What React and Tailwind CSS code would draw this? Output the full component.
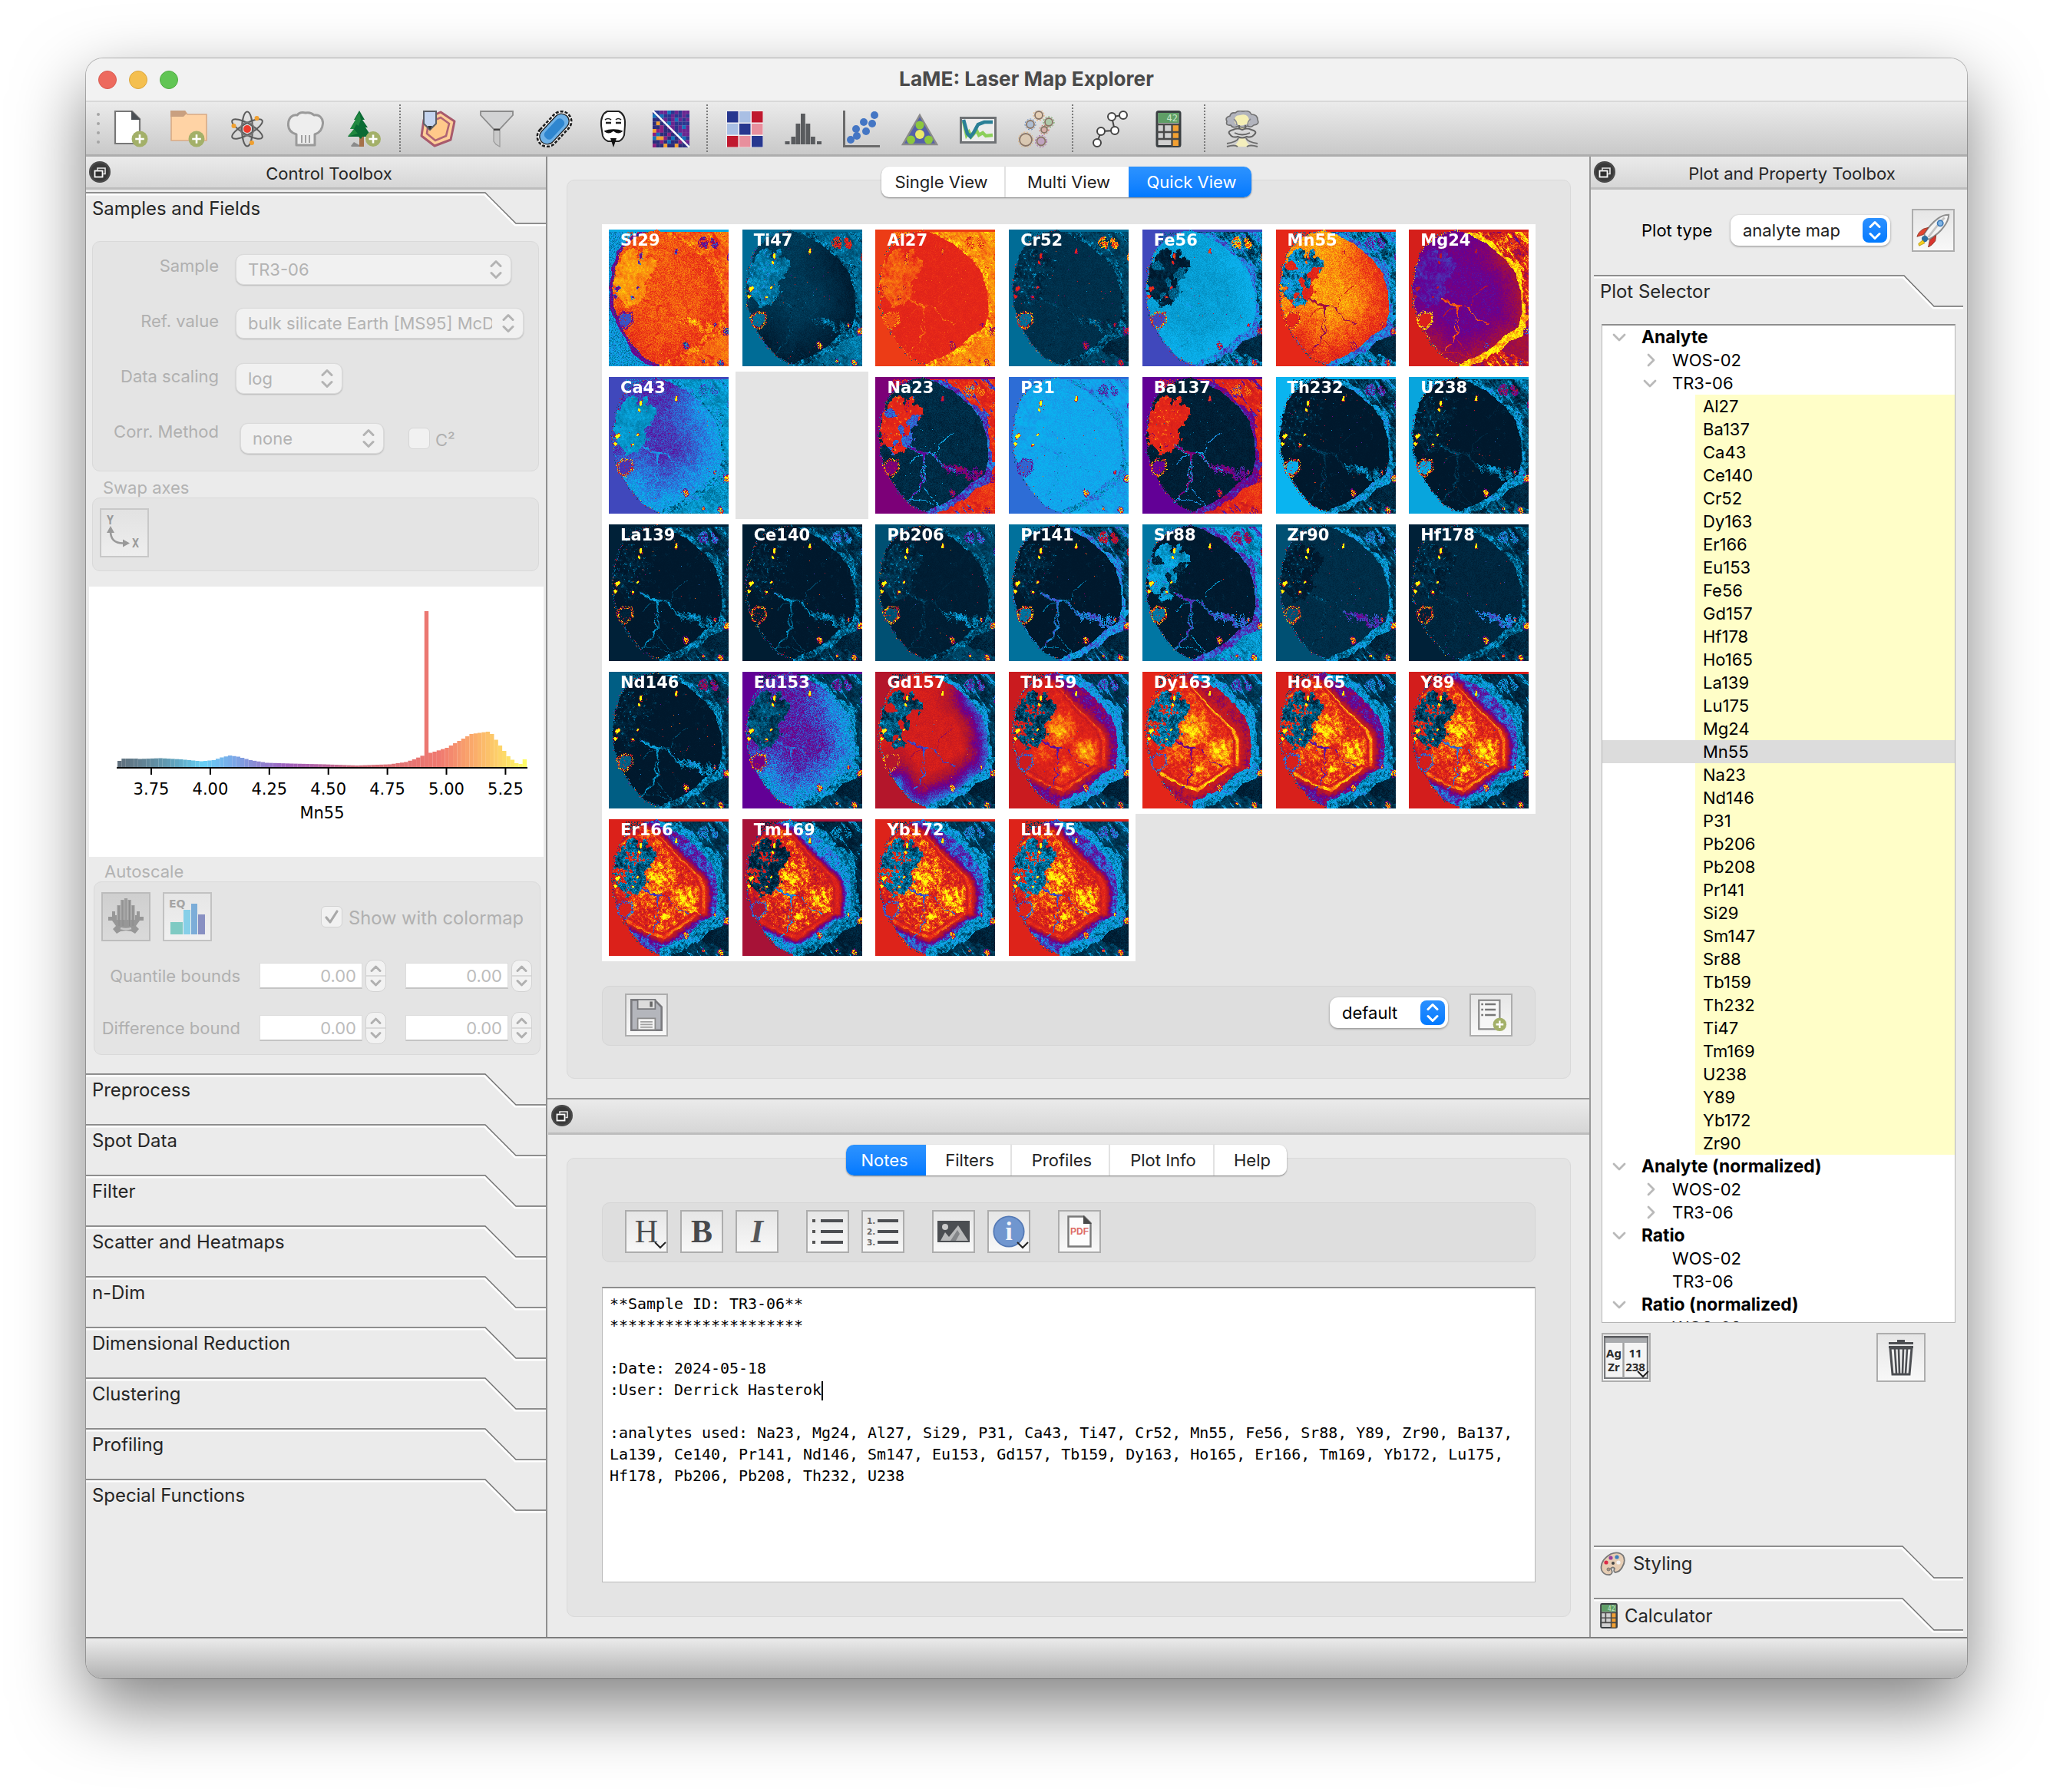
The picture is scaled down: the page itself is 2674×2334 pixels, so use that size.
import React, { useLayoutEffect, useRef } from "react";

/* ------------------------------------------------------------------ */
/* Colour scale shared by the element maps and the histogram           */
/* ------------------------------------------------------------------ */
const STOPS = [
  [0, 0, 24, 44],
  [0.06, 0, 52, 80],
  [0.14, 0, 108, 150],
  [0.21, 10, 180, 240],
  [0.28, 40, 118, 220],
  [0.33, 64, 72, 188],
  [0.41, 98, 0, 150],
  [0.47, 124, 0, 120],
  [0.57, 172, 20, 48],
  [0.7, 208, 28, 28],
  [0.79, 232, 40, 24],
  [0.87, 248, 120, 16],
  [0.94, 252, 190, 12],
  [1, 255, 255, 10],
];

function scaleColor(t) {
  const v = t < 0 ? 0 : t > 1 ? 1 : t;
  for (let i = 1; i < STOPS.length; i++) {
    if (v <= STOPS[i][0]) {
      const a = STOPS[i - 1];
      const b = STOPS[i];
      const k = (v - a[0]) / (b[0] - a[0]);
      return [a[1] + (b[1] - a[1]) * k, a[2] + (b[2] - a[2]) * k, a[3] + (b[3] - a[3]) * k];
    }
  }
  return [255, 255, 10];
}

/* ------------------------------------------------------------------ */
/* Procedural garnet section                                           */
/* ------------------------------------------------------------------ */
const W = 156;
const H = 178;

function hash(x, y, s) {
  let h = (x * 374761393 + y * 668265263 + s * 982451653) | 0;
  h = Math.imul(h ^ (h >>> 13), 1274126177);
  h ^= h >>> 16;
  return (h >>> 0) / 4294967296;
}
function noise(x, y, s) {
  const xi = Math.floor(x);
  const yi = Math.floor(y);
  const fx = x - xi;
  const fy = y - yi;
  const sx = fx * fx * (3 - 2 * fx);
  const sy = fy * fy * (3 - 2 * fy);
  const a = hash(xi, yi, s);
  const b = hash(xi + 1, yi, s);
  const c = hash(xi, yi + 1, s);
  const d = hash(xi + 1, yi + 1, s);
  return a + (b - a) * sx + (c - a) * sy + (a - b - c + d) * sx * sy;
}
function fbm(x, y, s) {
  return noise(x, y, s) * 0.55 + noise(x * 2.1, y * 2.1, s + 1) * 0.3 + noise(x * 4.3, y * 4.3, s + 2) * 0.15;
}
function segDist(px, py, ax, ay, bx, by) {
  const dx = bx - ax;
  const dy = by - ay;
  let t = ((px - ax) * dx + (py - ay) * dy) / (dx * dx + dy * dy);
  t = t < 0 ? 0 : t > 1 ? 1 : t;
  return Math.hypot(px - ax - dx * t, py - ay - dy * t);
}
function lineDist(px, py, pts) {
  let d = 9;
  for (let i = 1; i < pts.length; i++) {
    d = Math.min(d, segDist(px, py, pts[i - 1][0], pts[i - 1][1], pts[i][0], pts[i][1]));
  }
  return d;
}
function inPoly(px, py, p) {
  let r = false;
  for (let i = 0, j = p.length - 1; i < p.length; j = i++) {
    if (p[i][1] > py !== p[j][1] > py && px < ((p[j][0] - p[i][0]) * (py - p[i][1])) / (p[j][1] - p[i][1]) + p[i][0]) r = !r;
  }
  return r;
}
function glow(u, v, x, y, w) {
  return Math.exp(-((u - x) * (u - x) + (v - y) * (v - y)) / w);
}

const GRAIN = [[0.3, 0.02], [0.2, 0.06], [0.1, 0.16], [0.05, 0.28], [0.028, 0.42], [0.04, 0.56], [0.09, 0.68], [0.14, 0.77], [0.21, 0.86], [0.3, 0.94], [0.42, 0.985], [0.55, 0.93], [0.68, 0.87], [0.8, 0.77], [0.91, 0.71], [0.94, 0.6], [0.93, 0.45], [0.89, 0.32], [0.8, 0.22], [0.68, 0.12], [0.52, 0.04], [0.4, 0.0]];
const PATCH = [[0.13, 0.17], [0.2, 0.12], [0.25, 0.19], [0.32, 0.14], [0.35, 0.2], [0.39, 0.27], [0.33, 0.33], [0.3, 0.4], [0.32, 0.45], [0.27, 0.5], [0.2, 0.56], [0.14, 0.55], [0.1, 0.5], [0.03, 0.47], [0.05, 0.3]];
const ZONE = [[0.25, 0.05], [0.4, 0.09], [0.52, 0.21], [0.64, 0.32], [0.78, 0.43], [0.82, 0.52], [0.81, 0.69], [0.74, 0.7], [0.46, 0.88], [0.15, 0.76], [0.08, 0.6], [0.03, 0.45], [0.1, 0.18]];
const RING = [[[0.42, 0.1], [0.52, 0.21], [0.64, 0.32], [0.75, 0.41], [0.79, 0.5], [0.79, 0.68]], [[0.71, 0.71], [0.6, 0.78], [0.46, 0.865], [0.3, 0.82], [0.15, 0.74]]];
const VEINS = [
  [[0.26, 0.5], [0.34, 0.54], [0.42, 0.565], [0.5, 0.57], [0.55, 0.62], [0.57, 0.66], [0.66, 0.68]],
  [[0.4, 0.57], [0.415, 0.66], [0.41, 0.74], [0.36, 0.81], [0.28, 0.91]],
  [[0.4, 0.66], [0.37, 0.72], [0.41, 0.76]],
];
const FINE = [
  [[0.52, 0.56], [0.54, 0.48], [0.59, 0.44], [0.65, 0.41]],
  [[0.28, 0.9], [0.38, 0.89], [0.46, 0.93], [0.54, 0.94]],
  [[0.4, 0.81], [0.46, 0.87], [0.53, 0.93]],
  [[0.28, 0.64], [0.34, 0.58], [0.4, 0.57]],
];
const WEDGE = [[0.54, 0.6], [0.62, 0.66], [0.78, 0.68], [0.92, 0.67], [0.9, 0.73], [0.82, 0.77], [0.74, 0.72], [0.6, 0.69]];
const LENS = [[0.72, 0.87], [0.84, 0.79], [1.05, 0.76], [1.05, 0.97], [0.9, 0.93]];
const XTAL = [[0.07, 0.64], [0.12, 0.6], [0.18, 0.61], [0.19, 0.67], [0.14, 0.72], [0.09, 0.7]];
const SPOTS = [[0.05, 0.48, 0.02], [0.07, 0.43, 0.016], [0.24, 0.42, 0.013], [0.27, 0.19, 0.014], [0.255, 0.24, 0.009], [0.56, 0.16, 0.011], [0.19, 0.5, 0.014]];
const BIG = [[0.64, 0.845, 0.024], [0.88, 0.69, 0.014], [0.98, 0.74, 0.024], [0.93, 0.97, 0.022], [0.78, 0.96, 0.014]];
const ACC = [[0.78, 0.09, 0.042], [0.88, 0.1, 0.036], [1.0, 0.2, 0.02]];

let cached = null;
function fields() {
  if (cached) return cached;
  cached = [];
  for (let y = 0; y < H; y++) {
    for (let x = 0; x < W; x++) {
      const u = x / W;
      const v = y / H;
      const wu = u + (fbm(u * 22, v * 22, 5) - 0.5) * 0.04;
      const wv = v + (fbm(u * 22, v * 22, 9) - 0.5) * 0.04;
      const ju = u + (fbm(u * 26, v * 26, 15) - 0.5) * 0.11;
      const jv = v + (fbm(u * 26, v * 26, 19) - 0.5) * 0.11;
      const near = (list, squash) => {
        let m = 9;
        for (const s of list) m = Math.min(m, Math.hypot(wu - s[0], (wv - s[1]) * squash) / s[2]);
        return m;
      };
      let vein = 9;
      for (const l of VEINS) vein = Math.min(vein, lineDist(wu, wv, l));
      let fine = 9;
      for (const l of FINE) fine = Math.min(fine, lineDist(wu, wv, l));
      let ring = 9;
      for (const l of RING) ring = Math.min(ring, lineDist(u + (wu - u) * 0.5, v + (wv - v) * 0.5, l));
      const gu = u + (wu - u) * 0.5;
      const gv = v + (wv - v) * 0.5;
      cached.push({
        u, v,
        inside: inPoly(gu, gv, GRAIN),
        edge: lineDist(gu, gv, GRAIN.concat([GRAIN[0]])),
        patch: inPoly(ju, jv, PATCH),
        zone: inPoly(gu, gv, ZONE),
        zd: lineDist(gu, gv, ZONE.concat([ZONE[0]])),
        ring, vein, fine,
        wedge: inPoly(ju, jv, WEDGE),
        lens: inPoly(wu, wv, LENS),
        xtal: inPoly(gu, gv, XTAL),
        xedge: lineDist(gu, gv, XTAL.concat([XTAL[0]])),
        spot: near(SPOTS, v < 0.3 ? 0.6 : 1.2),
        big: near(BIG, 0.9),
        acc: near(ACC, 0.9),
        blob: Math.max(glow(u, v, 0.43, 0.42, 0.016), glow(u, v, 0.64, 0.58, 0.012), 0.6 * glow(u, v, 0.48, 0.72, 0.01), 0.7 * glow(u, v, 0.28, 0.6, 0.006)),
        n1: fbm(u * 9, v * 9, 31) - 0.5,
        n2: fbm(u * 24, v * 24, 37) - 0.5,
        n3: noise(u * 62, v * 62, 51) - 0.5,
        streak: fbm((u * 0.75 - v * 0.65) * 38, (u * 0.6 + v * 0.8) * 9, 41) - 0.5,
      });
    }
  }
  return cached;
}

function paint(ctx, m, seed) {
  const img = ctx.createImageData(W, H);
  const f = fields();
  const hot = m.hot === undefined ? 1.02 : m.hot;
  const dark = m.core < 0.1;
  for (let i = 0; i < f.length; i++) {
    const p = f[i];
    const x = i % W;
    const y = (i / W) | 0;
    const r = hash(x, y, seed) - 0.5;
    const r2 = hash(x, y, seed + 77);
    const right = p.u > 0.42;
    let val;
    if (!p.inside) {
      if (!right) {
        val = m.bg + (m.bn || 0) * r;
        if (p.v < 0.1 && p.u > 0.14 && r2 > 0.6) val = m.matrix + r * 0.1;
        if (m.halo !== undefined && p.edge < 0.03 + p.n1 * 0.04) val = m.halo + r * 0.14;
        if (p.edge < 0.014 && r2 > 0.82) val = r2 > 0.92 ? 0.5 + r * 0.9 : 0.1;
      } else {
        const mn = m.mn || 0.12;
        val = m.matrix + p.streak * mn * 1.6 + p.n3 * mn * 0.7 + r * mn * 0.6;
        if (p.lens) val = m.lens === undefined ? m.matrix * 0.45 + r * 0.05 : m.lens + r * 0.06 + p.n2 * 0.06;
        const band = (p.v > 0.62 ? 0.05 : 0.035) + p.n1 * 0.08;
        if (p.edge < band && p.v > 0.02) val = m.rim + r * 0.1 + p.n3 * 0.16 + p.streak * 0.2;
        if (p.streak > 0.17 && !p.lens) val = m.rim + r * 0.16 + p.n3 * 0.1;
        if (p.acc < 1 && p.n3 + r * 0.5 > -0.15) val = (m.acc === undefined ? m.rim + 0.2 : m.acc) + r * 0.3;
      }
      if (p.v < 0.012) val = m.bg;
    } else {
      const cn = m.n || 0.03;
      if (m.zoned) {
        const out = m.outer + r * 0.14 + p.n3 * 0.16 + p.n2 * 0.16;
        if (p.zone) {
          val = m.core - 0.07 + p.blob * 0.2 + p.n2 * m.zn * 0.55 + p.n3 * m.zn * 0.5 + r * m.zn * 0.35;
          if (p.ring < 0.035 && p.blob < 0.5) val = m.core - 0.11 + r * 0.12 + p.n3 * 0.1;
          if (p.ring < 0.009) val = m.ring + r * 0.08 + p.n2 * 0.16;
          else if (p.ring < 0.016) val = (m.ring + m.core - 0.08) * 0.5 + r * 0.06;
        } else {
          const k = Math.min(1, p.zd / 0.05);
          val = out * k + (m.core - 0.14) * (1 - k) + p.n3 * 0.1 * (1 - k);
          if (p.edge < 0.03 + p.n2 * 0.04 && right) val = m.rim + r * 0.1 + p.n3 * 0.1;
        }
      } else {
        const k = Math.max(0, Math.min(1, 1 - (p.edge + p.n1 * 0.05) / (m.fw || 0.2)));
        const kk = k * Math.max(0, Math.min(1, (p.u + p.v - 0.6) * 2.5));
        val = m.core + ((m.edge === undefined ? m.core : m.edge) - m.core) * kk + r * cn + p.n2 * cn * 0.6;
      }
      if (p.wedge && m.wedge !== undefined && p.n2 + r * 0.6 > -0.2) val = m.wedge + r * 0.14 + p.n2 * 0.35;
      if (p.patch) {
        const pn = m.pn || 0.06;
        val = m.patch + r * pn * 0.7 + p.n2 * pn * 1.6 + p.n3 * pn * 0.8;
        if (m.zoned && p.n2 + p.n3 * 0.35 > 0.13) val = m.core - 0.08 + r * 0.25;
        if (m.pf !== undefined && p.n1 > 0.12) val = m.pf + r * 0.1;
      }
      const vw = (m.zoned ? 0.003 : 0.004) + p.n2 * 0.012;
      if (p.vein < vw) val = m.vein + r * 0.08 + p.n3 * 0.1;
      else if (p.vein < 0.009 && dark && r2 > 0.35) val = (m.vein + m.core) * 0.45 + r * 0.04;
      if (p.fine < 0.004 && !m.zoned && r2 > 0.3) val = val * 0.5 + m.vein * 0.5;
      if (dark && !p.patch && p.n2 > 0.2 && r2 > 0.6) val = Math.max(val, 0.03);
      if (dark && p.patch && p.n3 > 0.3 && r2 > 0.5) val += 0.09;
      if (p.edge < 0.008 && !right && r2 > 0.6) val = r2 > 0.84 ? 0.5 + r * 0.95 : m.rim;
      if (p.spot < 0.8) val = hot + r * 0.12;
      else if (p.spot < 1.15 && r2 > 0.55) val = hot * 0.65;
      if (r2 > 0.998) val = m.speck === undefined ? 0.5 + r * 0.8 : m.speck;
    }
    if (p.big < 0.9 && r2 > 0.15) val = hot - 0.14 + r * 0.45;
    else if (p.big < 1.2 && r2 > 0.5) val = 0.45;
    if (p.xtal && p.xedge > 0.008) {
      val = (m.xtal === undefined ? m.bg : m.xtal) + r * 0.03;
      if (r2 > 0.95) val = 0.7;
    } else if (p.xedge < 0.012 && r2 > 0.4) {
      val = m.xr === undefined ? 0.78 + r * 0.6 : m.xr + r * 0.15;
    }
    const c = scaleColor(val);
    img.data[i * 4] = c[0];
    img.data[i * 4 + 1] = c[1];
    img.data[i * 4 + 2] = c[2];
    img.data[i * 4 + 3] = 255;
  }
  ctx.putImageData(img, 0, 0);
}

const REE = { zoned: true, zn: 0.42, mn: 0.07, lens: 0.02, xr: 0.3, pn: 0.14 };
const DARK = { n: 0.012, mn: 0.1, lens: 0.03 };

const MAPS = [
  ["Si29", { bg: 0.2, bn: 0.14, halo: 0.42, core: 0.835, edge: 0.8, n: 0.09, patch: 0.9, matrix: 0.84, mn: 0.1, lens: 0.86, rim: 0.85, vein: 0.8, wedge: 0.87, hot: 0.42, speck: 0.95, xtal: 0.32, xr: 0.42, acc: 0.42 }],
  ["Ti47", { bg: 0.14, core: 0.065, edge: 0.01, fw: 0.3, n: 0.03, patch: 0.155, matrix: 0.13, mn: 0.07, lens: 0.15, rim: 0.12, vein: 0.07, wedge: 0.08, acc: 0.7 }],
  ["Al27", { bg: 0.81, core: 0.775, n: 0.05, patch: 0.84, matrix: 0.89, mn: 0.08, lens: 0.88, rim: 0.91, vein: 0.84, hot: 0.86, speck: 0.86, xtal: 0.83, xr: 0.88, acc: 0.81 }],
  ["Cr52", { ...DARK, bg: 0.14, core: 0.05, n: 0.03, patch: 0.055, matrix: 0.08, mn: 0.06, rim: 0.1, vein: 0.065, wedge: 0.07, hot: 0.75, acc: 0.85 }],
  ["Fe56", { bg: 0.33, core: 0.188, edge: 0.205, n: 0.03, patch: 0.02, pf: 0.12, matrix: 0.12, mn: 0.2, lens: 0.04, rim: 0.27, vein: 0.205, hot: 0.8, acc: 0.86 }],
  ["Mn55", { bg: 0.78, core: 0.9, edge: 0.78, fw: 0.3, n: 0.1, patch: 0.17, pn: 0.16, pf: 0.76, matrix: 0.14, mn: 0.2, lens: 0.03, rim: 0.28, vein: 0.55, hot: 0.85, speck: 0.98, xtal: 0.78, acc: 0.35 }],
  ["Mg24", { bg: 0.72, core: 0.43, edge: 0.55, n: 0.08, patch: 0.39, matrix: 0.7, mn: 0.4, lens: 0.55, rim: 0.96, vein: 0.83, hot: 0.6, speck: 0.5, xtal: 0.74, xr: 0.95, acc: 0.75 }],
  ["Ca43", { bg: 0.33, core: 0.35, edge: 0.22, fw: 0.35, n: 0.1, patch: 0.18, pn: 0.03, matrix: 0.18, mn: 0.05, lens: 0.17, rim: 0.2, vein: 0.25, xtal: 0.35, acc: 0.22 }],
  null,
  ["Na23", { bg: 0.47, core: 0.04, n: 0.05, patch: 0.77, pf: 0.3, matrix: 0.78, mn: 0.12, lens: 0.8, rim: 0.34, vein: 0.4, wedge: 0.44, hot: 0.7, speck: 0.2, acc: 0.8 }],
  ["P31", { bg: 0.29, core: 0.225, n: 0.035, patch: 0.225, pn: 0.03, matrix: 0.23, mn: 0.04, lens: 0.23, rim: 0.235, vein: 0.225, xtal: 0.3, xr: 0.4, acc: 0.3 }],
  ["Ba137", { bg: 0.41, core: 0.015, n: 0.03, patch: 0.77, matrix: 0.76, mn: 0.14, lens: 0.8, rim: 0.42, vein: 0.48, wedge: 0.4, hot: 0.78, speck: 0.15, acc: 0.8 }],
  ["Th232", { ...DARK, bg: 0.21, core: 0.0, patch: 0.01, matrix: 0.06, mn: 0.15, rim: 0.2, vein: 0.06, wedge: 0.12, acc: 0.35 }],
  ["U238", { ...DARK, bg: 0.195, core: 0.0, patch: 0.02, matrix: 0.08, mn: 0.15, rim: 0.18, vein: 0.07, wedge: 0.12, acc: 0.45 }],
  ["La139", { ...DARK, bg: 0.02, core: 0.0, patch: 0.01, matrix: 0.05, rim: 0.13, vein: 0.18, wedge: 0.11, acc: 0.3 }],
  ["Ce140", { ...DARK, bg: 0.01, core: 0.0, patch: 0.01, matrix: 0.05, rim: 0.13, vein: 0.16, wedge: 0.11, acc: 0.22 }],
  ["Pb206", { ...DARK, bg: 0.1, core: 0.012, patch: 0.05, matrix: 0.08, mn: 0.05, rim: 0.1, vein: 0.06, wedge: 0.13, acc: 0.3 }],
  ["Pr141", { ...DARK, bg: 0.145, core: 0.0, patch: 0.02, matrix: 0.07, mn: 0.14, rim: 0.26, vein: 0.3, wedge: 0.26, acc: 0.6 }],
  ["Sr88", { ...DARK, bg: 0.15, core: 0.005, patch: 0.185, pf: 0.03, matrix: 0.18, mn: 0.1, lens: 0.18, rim: 0.34, vein: 0.36, wedge: 0.28, acc: 0.5 }],
  ["Zr90", { ...DARK, bg: 0.1, core: 0.045, n: 0.03, patch: 0.01, matrix: 0.05, rim: 0.18, vein: 0.06, wedge: 0.34, acc: 0.2 }],
  ["Hf178", { ...DARK, bg: 0.02, core: 0.03, n: 0.03, patch: 0.03, matrix: 0.05, rim: 0.13, vein: 0.05, wedge: 0.26, acc: 0.2 }],
  ["Nd146", { ...DARK, bg: 0.12, core: 0.0, patch: 0.01, matrix: 0.06, rim: 0.15, vein: 0.19, wedge: 0.15, acc: 0.45 }],
  ["Eu153", { bg: 0.41, core: 0.38, edge: 0.2, fw: 0.28, n: 0.16, patch: 0.09, pn: 0.1, matrix: 0.06, mn: 0.07, rim: 0.17, vein: 0.3, lens: 0.02, xtal: 0.45, acc: 0.35 }],
  ["Gd157", { bg: 0.6, core: 0.71, edge: 0.28, fw: 0.22, n: 0.1, patch: 0.1, pn: 0.12, pf: 0.7, matrix: 0.06, mn: 0.09, rim: 0.2, vein: 0.34, lens: 0.02, xtal: 0.6, acc: 0.35 }],
  ["Tb159", { ...REE, zn: 0.2, bg: 0.68, core: 0.79, ring: 0.81, outer: 0.44, patch: 0.1, matrix: 0.06, rim: 0.22, vein: 0.4, acc: 0.3 }],
  ["Dy163", { ...REE, zn: 0.3, bg: 0.77, core: 0.83, ring: 0.94, outer: 0.57, patch: 0.15, matrix: 0.07, rim: 0.2, vein: 0.45, acc: 0.3 }],
  ["Ho165", { ...REE, bg: 0.73, core: 0.82, ring: 0.92, outer: 0.42, patch: 0.12, matrix: 0.05, rim: 0.18, vein: 0.4, acc: 0.2 }],
  ["Y89", { ...REE, bg: 0.71, core: 0.82, ring: 0.87, outer: 0.32, patch: 0.1, matrix: 0.04, rim: 0.17, vein: 0.3, acc: 0.15 }],
  ["Er166", { ...REE, bg: 0.74, core: 0.82, zn: 0.48, ring: 0.85, outer: 0.34, patch: 0.14, matrix: 0.06, rim: 0.17, vein: 0.34, acc: 0.2 }],
  ["Tm169", { ...REE, bg: 0.56, core: 0.79, zn: 0.58, ring: 0.76, outer: 0.22, patch: 0.06, matrix: 0.03, rim: 0.15, vein: 0.26, acc: 0.1 }],
  ["Yb172", { ...REE, bg: 0.75, core: 0.82, zn: 0.54, ring: 0.82, outer: 0.32, patch: 0.15, matrix: 0.06, rim: 0.18, vein: 0.32, acc: 0.2 }],
  ["Lu175", { ...REE, bg: 0.75, core: 0.82, zn: 0.52, ring: 0.78, outer: 0.33, patch: 0.16, matrix: 0.07, rim: 0.19, vein: 0.32, acc: 0.25 }],
];

function MapTile({ name, spec, seed }) {
  const ref = useRef(null);
  useLayoutEffect(() => {
    paint(ref.current.getContext("2d"), spec, seed);
  }, [spec, seed]);
  return (
    <div className="h-[192px] bg-white pl-[9px] pt-[7px]">
      <div className="relative h-[178px] w-[156px]">
        <canvas ref={ref} width={W} height={H} className="block" />
        <span className="absolute left-[15px] top-px font-['DejaVu_Sans',sans-serif] text-[21px] font-bold leading-[27px] text-white">{name}</span>
      </div>
    </div>
  );
}

/* ------------------------------------------------------------------ */
/* Small controls                                                      */
/* ------------------------------------------------------------------ */
function FloatIcon() {
  return (
    <svg width="28" height="28" viewBox="0 0 28 28">
      <circle cx="14" cy="14" r="14" fill="#4a4a4a" />
      <circle cx="14" cy="14" r="11.5" fill="#3a3a3a" />
      <path d="M11 11.500V9h10v7.500h-2.500" fill="none" stroke="#e8e8e8" strokeWidth="1.600" />
      <rect x="7.500" y="12.500" width="10" height="8" fill="#2e2e2e" stroke="#fff" strokeWidth="1.800" />
    </svg>
  );
}

function DockTitle({ children, h }) {
  return (
    <div className={"flex shrink-0 items-start border-b-[3px] border-[#bdbdbd] bg-gradient-to-b from-[#ebebeb] to-[#d6d6d6] pl-[4px] " + h}>
      <div className="pt-[6px]"><FloatIcon /></div>
      <div className="flex-1 pl-[2px] pt-[8px] text-center text-[22px] leading-[28px] text-[#262626]">{children}</div>
    </div>
  );
}

/* Slanted page header of a tool box */
function ToolTab({ children, w, knee, drop, end, className, icon, row = "h-[44px]" }) {
  return (
    <div className={"relative shrink-0 " + className}>
      <svg className="absolute left-0 top-0" width={w} height={drop + 6} viewBox={`0 0 ${w} ${drop + 6}`} fill="none">
        <path d={`M0 3H${knee}L${end} ${drop + 3}H${w}`} stroke="#fff" strokeWidth="3" />
        <path d={`M0 1H${knee + 1}L${end + 1} ${drop + 1}H${w}`} stroke="#6e6e6e" strokeWidth="1.300" />
      </svg>
      <div className={"relative flex items-center gap-[10px] " + row}>
        {icon}
        <span className="text-[23.900px] leading-[28px] text-[#262626]">{children}</span>
      </div>
    </div>
  );
}

function Chevrons({ color }) {
  return (
    <svg width="16" height="28" viewBox="0 0 16 28" fill="none" stroke={color} strokeWidth="3" strokeLinecap="round" strokeLinejoin="round">
      <path d="M2 9.500L8 3.500L14 9.500M2 18.500L8 24.500L14 18.500" />
    </svg>
  );
}

function DisabledSelect({ children, className }) {
  return (
    <div className={"flex h-[40px] items-center justify-between rounded-[10px] border border-[#dadada] bg-[#f1f1f1] pl-[15px] pr-[11px] shadow-[0_1px_2px_rgba(0,0,0,0.2)] " + className}>
      <span className="overflow-hidden whitespace-nowrap text-[22px] leading-[28px] text-[#b3b3b3]">{children}</span>
      <Chevrons color="#b3b3b3" />
    </div>
  );
}

function ActiveSelect({ children, className }) {
  return (
    <div className={"flex h-[40px] items-center justify-between rounded-[11px] bg-white pl-4 pr-1 shadow-[0_1px_3px_rgba(0,0,0,0.4)] " + className}>
      <span className="whitespace-nowrap text-[22px] leading-[28px]">{children}</span>
      <span className="flex h-[32px] w-[32px] items-center justify-center rounded-[8px] bg-gradient-to-b from-[#2a90ff] to-[#007aff]">
        <Chevrons color="#ffffff" />
      </span>
    </div>
  );
}

function ToolButton({ children, className = "h-[56px] w-[56px]" }) {
  return (
    <div className={"flex shrink-0 items-center justify-center border-2 border-[#adadad] bg-gradient-to-b from-[#e6e6e6] to-[#f8f8f8] " + className}>
      {children}
    </div>
  );
}

function Tabs({ items, active }) {
  return (
    <div className="relative z-10 mr-[7px] flex h-[40px] rounded-[10px] bg-white shadow-[0_1px_2px_rgba(0,0,0,0.45)]">
      {items.map(([label, w], i) => {
        const on = i === active;
        return (
          <div
            key={label}
            style={{ width: w }}
            className={
              "flex items-center justify-center text-[22px] leading-[28px] " +
              (on ? "bg-gradient-to-b from-[#2c93ff] to-[#0079ff] text-white " : "text-[#222] ") +
              (i === 0 ? "pr-[3px] " : "pl-[5px] ") +
              (on && i === 0 ? "rounded-l-[10px] " : "") +
              (on && i === items.length - 1 ? "rounded-r-[10px] " : "") +
              (!on && i < items.length - 1 && i + 1 !== active ? "border-r-2 border-[#e2e2e2]" : "")
            }
          >
            {label}
          </div>
        );
      })}
    </div>
  );
}

function Stepper() {
  return (
    <div className="ml-1 flex h-[42px] w-[27px] flex-col items-center rounded-[10px] border border-[#d2d2d2] bg-[#f2f2f2]">
      <svg width="25" height="40" viewBox="0 0 25 40" fill="none" stroke="#b0b0b0" strokeWidth="3" strokeLinecap="round" strokeLinejoin="round">
        <path d="M7 13.500L12.500 8L18 13.500M7 26.500L12.500 32L18 26.500" />
        <path d="M0 20H25" stroke="#dadada" strokeWidth="2" strokeLinecap="butt" />
      </svg>
    </div>
  );
}

function Spin() {
  return (
    <div className="flex items-center">
      <div className="flex h-[34px] w-[134px] items-center justify-end border border-b-2 border-[#dcdcdc] border-b-[#c4c4c4] bg-white pr-[7px] text-[22px] leading-[28px] text-[#bcbcbc]">0.00</div>
      <Stepper />
    </div>
  );
}

/* ------------------------------------------------------------------ */
/* Icons                                                               */
/* ------------------------------------------------------------------ */
function Svg({ children, s = 48 }) {
  return (
    <svg width={s} height={s} viewBox="0 0 48 48" fill="none">
      {children}
    </svg>
  );
}
const Plus = ({ x, y, r = 10 }) => (
  <g>
    <circle cx={x} cy={y} r={r} fill="#a3b069" />
    <path d={`M${x - r * 0.55} ${y}h${r * 1.1}M${x} ${y - r * 0.55}v${r * 1.1}`} stroke="#fff" strokeWidth="2.600" />
  </g>
);
const NewDoc = () => (
  <Svg>
    <path d="M4 1H26L36 11V43H4Z" fill="#fff" stroke="#777" strokeWidth="2.200" />
    <path d="M25 0L37 12H25Z" fill="#4a4f54" />
    <Plus x={36} y={37} r={10.500} />
  </Svg>
);
const Folder = () => (
  <Svg>
    <path d="M1 1H19L22 5H47V39H1Z" fill="#ffd3a5" stroke="#d9ab85" strokeWidth="1.600" />
    <path d="M0 0H19L21 4L17 8H0Z" fill="#c9a080" />
    <Plus x={34} y={37} r={10.500} />
  </Svg>
);
const Atom = () => (
  <Svg>
    <g stroke="#5c5c5c" strokeWidth="2">
      <ellipse cx="24" cy="24" rx="7" ry="22.500" />
      <ellipse cx="24" cy="24" rx="7" ry="22.500" transform="rotate(60 24 24)" />
      <ellipse cx="24" cy="24" rx="7" ry="22.500" transform="rotate(-60 24 24)" />
      <circle cx="24" cy="24" r="9" stroke="#777" strokeWidth="1.500" />
    </g>
    <circle cx="24" cy="24" r="5" fill="#ef3b2c" />
    <circle cx="36.500" cy="10" r="3" fill="#f0a030" />
    <circle cx="6.500" cy="20" r="3" fill="#f0a030" />
    <circle cx="30" cy="42" r="3" fill="#f0a030" />
  </Svg>
);
const Chef = () => (
  <Svg>
    <path d="M12 45V31C5 29 1 24 1.500 17C2 9 7 5 13 6C16 2 20 2 24 3C29 2 32 3 35 6C42 5 47 10 46.500 17C46 24 42 29 36 31V45Z" fill="#eee" stroke="#9a9a9a" strokeWidth="3" strokeLinejoin="round" />
    <path d="M19 32V42M24 32V42M29 32V42" stroke="#a0a0a0" strokeWidth="2" />
  </Svg>
);
const Tree = () => (
  <Svg>
    <rect x="18" y="34" width="6" height="13" fill="#a5714a" />
    <path d="M18 0L25 12H22L29 22H26L34 34H22L20 37L17 34H3L11 24H6L13 12H11Z" fill="#0a6b34" />
    <path d="M18 2L20 12L17 20L14 18L11 24L16 30L6 33H3L11 24H6L13 12H12Z" fill="#35a04a" opacity=".55" />
    <path d="M7 46L11 41L18 45V47H8Z" fill="#8a8a8a" />
    <Plus x={36} y={37} r={10} />
  </Svg>
);
const PolygonIcon = () => (
  <Svg>
    <path d="M28 2L46 14L41 38L20 46L3 33L6 12Z" fill="#ffcf98" stroke="#a85a6c" strokeWidth="3" strokeLinejoin="round" />
    <path d="M28 9L39 17L35 33L21 39L10 30L12 16Z" fill="#ffc98a" stroke="#b06474" strokeWidth="2.600" />
    <path d="M6 1H22V17L14 25L6 17Z" fill="#c5d5ef" stroke="#5b5f66" strokeWidth="2" />
    <path d="M11 20L14 25L17 20Z" fill="#333" />
  </Svg>
);
const Funnel = () => (
  <Svg>
    <path d="M4 1H46V6L29 24H21L4 6Z" fill="#d2d3d4" stroke="#8b8b8b" strokeWidth="1.800" />
    <path d="M21 25H29V47L24 44L21 40Z" fill="#c9c9c9" stroke="#999" strokeWidth="1.200" />
    <path d="M21 25H29" stroke="#444" strokeWidth="2" />
  </Svg>
);
const Capsule = () => (
  <Svg>
    <g transform="rotate(-47 24 24)">
      <rect x="-2.500" y="11" width="53" height="26" rx="13" fill="#fff" stroke="#1c1c1c" strokeWidth="2.600" strokeDasharray="4 2" />
      <rect x="0.500" y="14" width="47" height="20" rx="10" fill="#6fb1e6" stroke="#222" strokeWidth="1.300" />
      <rect x="8" y="18" width="32" height="12" rx="5" fill="#2f86cf" />
    </g>
  </Svg>
);
const Mask = () => (
  <Svg>
    <path d="M17 1H32Q41 5 40 19L39 32Q37 38 32 40H18Q13 38 11 33L9 20Q8 5 17 1Z" fill="#fff" stroke="#222" strokeWidth="2" />
    <path d="M14 12Q18 9 22 12M28 12Q31 9 35 12" stroke="#222" strokeWidth="1.600" />
    <path d="M15 16H22M28 16H35" stroke="#222" strokeWidth="2.600" />
    <path d="M14 27Q19 31 25 26Q31 31 36 27Q32 25 25 25Q18 25 14 27Z" fill="#111" stroke="#111" strokeWidth="1.400" />
    <path d="M21 36H29L25 48Z" fill="#111" />
  </Svg>
);
const HeatDiag = () => {
  const cells = [];
  for (let r = 0; r < 10; r++)
    for (let c = 0; c < 10; c++) {
      const k = hash(c, r, 3);
      const lower = r > c;
      const col = lower ? (k > 0.85 ? "#f5a030" : k > 0.6 ? "#8a1f80" : k > 0.4 ? "#1272bb" : "#2b2c7c") : k > 0.6 ? "#6a2590" : k > 0.45 ? "#1272bb" : "#2c3590";
      cells.push(<rect key={r * 10 + c} x={c * 4.8} y={r * 4.8} width="4.900" height="4.900" fill={col} />);
    }
  return (
    <Svg>
      {cells}
      <path d="M0 0L48 48" stroke="#fff" strokeWidth="2.400" />
    </Svg>
  );
};
const Grid9 = () => {
  const cs = ["#27378f", "#a9bfe4", "#c0192f", "#a9bfe4", "#27378f", "#e88f9d", "#c0192f", "#e88f9d", "#27378f"];
  return (
    <Svg>
      <rect x="0" y="0" width="48" height="48" fill="#f2f0f2" />
      {cs.map((c, i) => (
        <rect key={i} x={1 + (i % 3) * 16} y={1 + Math.floor(i / 3) * 16} width="14.500" height="14.500" fill={c} />
      ))}
    </Svg>
  );
};
const HistIcon = () => (
  <Svg>
    {[4, 10, 27, 40, 27, 10, 4].map((h, i) => (
      <rect key={i} x={[0.5, 8.5, 14.5, 21, 27.5, 34, 42][i]} y={44 - h} width={i === 0 || i === 6 ? 6 : 5.8} height={h} fill="#595b5e" />
    ))}
  </Svg>
);
const ScatterIcon = () => (
  <Svg>
    <path d="M1.500 0V46.500H48" stroke="#6a6a6a" strokeWidth="3" />
    {[[10, 38], [18, 33], [17, 24], [27, 15], [30, 27], [38, 17], [41, 6]].map(([x, y]) => (
      <circle key={x} cx={x} cy={y} r="5" fill="#4476c4" />
    ))}
  </Svg>
);
const TernIcon = () => (
  <Svg>
    <path d="M24 6L46 44H2Z" fill="#5560a8" stroke="#8a8a8a" strokeWidth="2.400" />
    <circle cx="24" cy="19" r="5.500" fill="#8cc63f" />
    <circle cx="12.500" cy="38" r="5.500" fill="#8cc63f" />
    <circle cx="35.500" cy="38" r="5.500" fill="#8cc63f" />
    <circle cx="24" cy="31" r="6" fill="#ece86a" />
  </Svg>
);
const PlotIcon = () => (
  <Svg>
    <rect x="1.500" y="9.500" width="45" height="32" fill="#ececec" stroke="#6f7275" strokeWidth="3" />
    <path d="M5 14L9 32L12 28L15 34L22 26L25 32L30 29L34 33L43 32" stroke="#8ccf5a" strokeWidth="4.400" />
    <path d="M5 12L10 30L14 34L18 29L24 18L32 15H43" stroke="#2a7f96" strokeWidth="4.600" />
  </Svg>
);
const Bubbles = () => (
  <Svg>
    {[[27, 6, 5, "#e8a860"], [16, 18, 5, "#5a86c0"], [40, 15, 5, "#58a048"], [34, 25, 4, "#d06050"], [10, 38, 8, "#e8b878"], [30, 40, 5.5, "#a050a0"]].map(([x, y, r, c]) => (
      <g key={x}>
        <circle cx={x} cy={y} r={r + 2} stroke={c} strokeWidth="1" strokeDasharray="2 2" />
        <circle cx={x} cy={y} r={r} fill={c} fillOpacity=".35" stroke="#8a7566" strokeWidth="1.800" />
      </g>
    ))}
  </Svg>
);
const ProfileIcon = () => (
  <Svg>
    <path d="M7 42L12 27L30 26L26 8L41 6" stroke="#444" strokeWidth="2" />
    {[[7, 42], [12, 27], [30, 26], [26, 8], [41, 6]].map(([x, y]) => (
      <circle key={x} cx={x} cy={y} r="5" fill="#fff" stroke="#444" strokeWidth="2" />
    ))}
  </Svg>
);
const CalcIcon = ({ s = 48 }) => (
  <Svg s={s}>
    <rect x="9" y="1.500" width="30" height="45" rx="2" fill="#d0d0d0" stroke="#3a3f42" strokeWidth="3" />
    <rect x="10.500" y="3" width="27" height="13" fill="#5f9e66" />
    <text x="36" y="14" textAnchor="end" fontSize="12" fill="#c8e6c8" fontFamily="DejaVu Sans Mono">42</text>
    <rect x="29" y="19" width="9" height="27" fill="#f2a032" />
    <path d="M9 18H39M9 28H39M9 37H39M18 18V37M28.500 18V47" stroke="#4a4a4a" strokeWidth="2.400" />
    <path d="M38.500 17V47" stroke="#3a3f42" strokeWidth="3" />
  </Svg>
);
const Nuke = () => (
  <Svg>
    <path d="M21 17H27L27.500 37L34 47H14L20.500 37Z" fill="#f3eebc" />
    <path d="M4 14Q1 9 8 7Q9 2 15 3Q19 -1 25 1Q33 -1 36 5Q44 5 44 12Q47 18 39 19Q35 23 31 20Q24 24 19 20Q12 24 9 19Q2 20 4 14Z" fill="#b2b4bd" stroke="#707070" strokeWidth="1.600" />
    <path d="M14 14Q13 6 21 6Q31 3 33 12Q35 18 28 18Q22 21 18 18Q14 18 14 14Z" fill="#f5efb4" />
    <path d="M13 11Q17 14 17 19M35 11Q31 14 31 19" stroke="#8a8a92" strokeWidth="1.600" />
    <path d="M20 19V26M28 19V26" stroke="#666" strokeWidth="2.200" />
    <path d="M8 31Q4 27 12 25Q18 22 24 25Q30 22 36 25Q44 27 40 31Q36 36 30 34Q24 37 18 34Q11 36 8 31Z" fill="#d8d8d8" stroke="#636363" strokeWidth="2" />
    <path d="M14 29Q24 34 34 29" stroke="#666" strokeWidth="1.800" />
    <path d="M19 36Q17 41 4 43M29 36Q31 41 44 43M4 47Q14 44 18 47M44 47Q34 44 30 47" stroke="#6c6c6c" strokeWidth="2" />
  </Svg>
);
const SwapIcon = () => (
  <Svg>
    <text x="1" y="13" fontSize="15" fontWeight="700" fill="#999" fontFamily="DejaVu Sans Mono">Y</text>
    <text x="34" y="43" fontSize="15" fontWeight="700" fill="#999" fontFamily="DejaVu Sans Mono">X</text>
    <path d="M6 22Q6 37.500 22 37.500" stroke="#999" strokeWidth="2.600" />
    <path d="M1 24L6 15L11 24ZM22 32.500V42.500L31 37.500Z" fill="#999" />
  </Svg>
);
const HistGear = () => (
  <Svg>
    {[27, 34, 36, 34, 27].map((h, i) => (
      <rect key={i} x={12.500 + i * 4.7} y={36 - h} width="4.200" height={h} fill="#9c9c9c" />
    ))}
    <path d="M6 17H10V22H12V28H36V22H38V17H42V24H47V29H42L37 36L41 40L36 46L31 43L24 42L17 43L12 46L7 40L11 36L6 29H1V24H6Z" fill="#979797" />
    <path d="M15 10V36M20 3V36M28.500 3V36M33 10V36" stroke="#8a8a8a" strokeWidth="1" />
    <path d="M17 39Q24 41 31 39" stroke="#c8c8c8" strokeWidth="2.400" />
  </Svg>
);
const EqIcon = () => (
  <Svg>
    <text x="0" y="12" fontSize="14" fontWeight="700" fill="#a5a5a5" fontFamily="DejaVu Sans">EQ</text>
    <rect x="2" y="31" width="16" height="16" fill="#7fcac3" />
    <rect x="19" y="15" width="9" height="32" fill="#86cfe8" />
    <rect x="29" y="7" width="8" height="40" fill="#7cadd8" />
    <rect x="38" y="21" width="9" height="26" fill="#8890c2" />
  </Svg>
);
const SaveIcon = () => (
  <Svg s={42}>
    <path d="M1.500 1.500H36L46.500 12V46.500H1.500Z" fill="#b4b6bc" stroke="#7a7a7e" strokeWidth="3" />
    <rect x="11" y="1" width="26" height="14" fill="#dcdcdc" stroke="#77787c" strokeWidth="2" />
    <rect x="29" y="4" width="4" height="8" fill="#666" />
    <rect x="11" y="29" width="26" height="17" fill="#f3f3f3" stroke="#8a8a8a" strokeWidth="2" />
    <path d="M15 34H33M15 38H33M15 42H33" stroke="#a0a0a0" strokeWidth="2" />
  </Svg>
);
const ListAdd = () => (
  <Svg s={42}>
    <rect x="6" y="2" width="31" height="43" fill="#f6f6f6" stroke="#8a8a8a" strokeWidth="2.600" />
    <path d="M15 8H31M15 16H31M15 24H31" stroke="#777" strokeWidth="3" />
    <path d="M9.500 8H12.500M9.500 16H12.500M9.500 24H12.500" stroke="#777" strokeWidth="3" />
    <Plus x={37} y={38} r={10} />
  </Svg>
);
const Rocket = () => (
  <Svg s={44}>
    <path d="M46 2Q38 2 31 7Q20 15 11 29L13 34L18 37Q32 29 39 19Q46 10 46 2Z" fill="#f3f3f3" stroke="#8f8f8f" strokeWidth="2.200" />
    <path d="M40 6Q30 16 17 34" stroke="#c4c4c4" strokeWidth="3" />
    <circle cx="34" cy="14" r="4" fill="#7fb4e4" stroke="#3d78b5" strokeWidth="1.800" />
    <path d="M17 20L10 22Q3 26 1 33L10 30Z" fill="#e2452f" stroke="#8c3a2c" strokeWidth="1" />
    <path d="M28 31L27 39Q23 45 17 48L19 38Z" fill="#d8352f" stroke="#8c3a2c" strokeWidth="1" />
    <circle cx="12" cy="36" r="4.500" fill="#2e6f9e" />
    <path d="M9 38L12 42L4 46L3 43Z" fill="#f4cf1c" stroke="#b99a1a" strokeWidth="1" />
  </Svg>
);
const Caret = () => (
  <svg className="absolute bottom-[5px] right-[2px]" width="16" height="10" viewBox="0 0 16 10" fill="none" stroke="#222" strokeWidth="2">
    <path d="M1 1L8 8L15 1" />
  </svg>
);
const ListIcon = ({ numbered }) => (
  <svg width="42" height="40" viewBox="0 0 42 40" fill="none">
    {[6, 20, 34].map((y, i) => (
      <g key={y}>
        <path d={`M${numbered ? 14 : 12} ${y}H41`} stroke="#4c4e52" strokeWidth="4" />
        {numbered ? (
          <text x="0" y={y + 4} fontSize="10.500" fontWeight="700" fill="#666" fontFamily="DejaVu Sans">{i + 1}.</text>
        ) : (
          <rect x="1" y={y - 2} width="4" height="4" fill="#555" />
        )}
      </g>
    ))}
  </svg>
);
const PictureIcon = () => (
  <svg width="42" height="28" viewBox="0 0 42 28">
    <rect width="42" height="28" fill="#4b4e52" />
    <circle cx="10" cy="8" r="4" fill="#c9c9c9" />
    <path d="M4 26L10 15L15 21L27 6L40 26Z" fill="#b9babb" />
    <path d="M17 26L26 12L29 17L24 26Z" fill="#85878a" />
  </svg>
);
const InfoIcon = () => (
  <Svg s={42}>
    <circle cx="24" cy="24" r="22.500" fill="#7096cf" stroke="#5479b5" strokeWidth="2" />
    <text x="24" y="37" textAnchor="middle" fontSize="38" fontWeight="700" fill="#f2f5fa" fontFamily="Liberation Serif">i</text>
  </Svg>
);
const PdfIcon = () => (
  <svg width="32" height="42" viewBox="0 0 32 42">
    <path d="M1.500 1.500H22L30.500 10V40.500H1.500Z" fill="#fdfdfd" stroke="#7a7a7a" strokeWidth="2.400" />
    <path d="M21 0L32 11H21Z" fill="#4a4a4a" />
    <text x="16" y="25" textAnchor="middle" fontSize="12" fill="#dc6b66" fontWeight="700" fontFamily="Liberation Sans">PDF</text>
  </svg>
);
const AgIcon = () => (
  <svg width="58" height="56" viewBox="0 0 58 56">
    <rect x="1" y="1" width="56" height="54" fill="#f4f4f4" stroke="#77797c" strokeWidth="2.400" />
    <rect x="2" y="2" width="54" height="7" fill="#a9abae" />
    <rect x="0" y="0" width="58" height="2.500" fill="#58595c" />
    <path d="M25.500 9V55" stroke="#a0a0a0" strokeWidth="2.400" />
    <g fontFamily="Noto Sans" fontWeight="700" fontSize="15" fill="#2a2a2a" textAnchor="middle">
      <text x="13" y="28">Ag</text>
      <text x="13" y="46">Zr</text>
      <text x="41" y="28">11</text>
      <text x="41" y="46">238</text>
    </g>
  </svg>
);
const Trash = () => (
  <svg width="34" height="48" viewBox="0 0 34 48" fill="none">
    <path d="M12 2.500H22M1 5.500H33M1 10.500H33" stroke="#4c4e52" strokeWidth="3.200" />
    <path d="M3 12L6 46H28L31 12Z" fill="#f0f0f0" stroke="#4c4e52" strokeWidth="3" />
    <path d="M9 13L11 45M14 13L15 45M20 13L19 45M25 13L23 45" stroke="#4c4e52" strokeWidth="2.600" />
  </svg>
);
const Palette = () => (
  <svg width="33" height="32" viewBox="0 0 33 32">
    <path d="M14 3Q24 -1 30 5Q34 12 29 20Q26 26 20 27Q17 26 19 22Q17 19 14 22Q18 28 13 30Q5 31 2 24Q-1 12 14 3Z" fill="#e6cdb4" stroke="#777" strokeWidth="1.800" />
    <circle cx="14" cy="8" r="2.600" fill="#9a3f9c" />
    <circle cx="22" cy="7" r="2.600" fill="#3a7fbe" />
    <circle cx="8" cy="14" r="2.600" fill="#dd2a48" />
    <circle cx="17" cy="15" r="2" fill="#444" />
    <circle cx="24" cy="14" r="2.600" fill="#f4f4f4" />
    <circle cx="11" cy="23" r="2" fill="#b29478" stroke="#777" />
  </svg>
);

/* ------------------------------------------------------------------ */
/* Histogram                                                           */
/* ------------------------------------------------------------------ */
const HIST_KEYS = [[0, 8], [1, 11], [4, 11], [5, 10.5], [10, 11.5], [15, 10], [20, 7.5], [23, 9], [25, 12.5], [27, 15], [29, 13.500], [32, 9], [36, 5.5], [42, 4.500], [50, 3.500], [58, 2], [66, 3.500], [70, 6.5], [72, 10], [75, 17], [77, 20], [80, 25], [83, 34], [86, 43], [90, 46], [91, 43], [93, 28], [95, 14], [97, 5], [98, 4], [99, 10]];
function histHeight(i) {
  if (i === 75) return 203;
  for (let k = 1; k < HIST_KEYS.length; k++) {
    const [a, ha] = HIST_KEYS[k - 1];
    const [b, hb] = HIST_KEYS[k];
    if (i <= b) return ha + ((hb - ha) * (i - a)) / (b - a);
  }
  return 10;
}
function Histogram() {
  const bw = 5.33;
  return (
    <svg width="592" height="352" viewBox="0 0 592 352" className="ml-[4px] block bg-white">
      {Array.from({ length: 100 }, (_, i) => {
        const c = scaleColor((i + 0.5) / 100).map((k) => Math.round(k * 0.62 + 255 * 0.38));
        const h = histHeight(i);
        return <rect key={i} x={37 + i * bw} y={235 - h} width={bw + 0.1} height={h} fill={`rgb(${c[0]},${c[1]},${c[2]})`} />;
      })}
      <path d="M36 236H571" stroke="#000" strokeWidth="2" />
      {["3.75", "4.00", "4.25", "4.50", "4.75", "5.00", "5.25"].map((t, i) => (
        <g key={t}>
          <path d={`M${81 + i * 76.9} 236V245`} stroke="#000" strokeWidth="2" />
          <text x={81 + i * 76.9} y="271" textAnchor="middle" fontSize="21" fontFamily="DejaVu Sans">{t}</text>
        </g>
      ))}
      <text x="303.500" y="302" textAnchor="middle" fontSize="21" fontFamily="DejaVu Sans">Mn55</text>
    </svg>
  );
}

/* ------------------------------------------------------------------ */
/* Panels                                                              */
/* ------------------------------------------------------------------ */
const GROUP = "rounded-[10px] border border-[#d9d9d9] bg-[#e4e4e4] ";

function Field({ label, pad, gap, children }) {
  return (
    <div className={"flex items-center " + gap}>
      <div className={"w-[164px] shrink-0 text-right text-[22px] leading-[28px] text-[#b0b0b0] " + pad}>{label}</div>
      {children}
    </div>
  );
}

function LeftPanel() {
  return (
    <div className="flex w-[601px] shrink-0 flex-col border-r-2 border-[#8f8f8f]">
      <DockTitle h="h-[43px]">Control Toolbox</DockTitle>
      <ToolTab className="mt-[3px] h-[64px] pl-[8px]" w={599} knee={519} end={559} drop={40}>Samples and Fields</ToolTab>
      <div className={GROUP + "ml-[8px] h-[300px] w-[582px] pt-[16px]"}>
        <Field label="Sample" pad="pb-[10px]" gap=""><DisabledSelect className="ml-[22px] w-[359px]">TR3-06</DisabledSelect></Field>
        <Field label="Ref. value" pad="pb-[6px]" gap="mt-[30px]"><DisabledSelect className="ml-[22px] w-[375px]"><span className="block w-[318px] overflow-hidden">bulk silicate Earth [MS95] McD</span></DisabledSelect></Field>
        <Field label="Data scaling" pad="pb-[6px]" gap="mt-[32px]"><DisabledSelect className="ml-[22px] w-[139px]">log</DisabledSelect></Field>
        <Field label="Corr. Method" pad="pb-[18px]" gap="mt-[35px]">
          <DisabledSelect className="ml-[28px] w-[187px]">none</DisabledSelect>
          <div className="ml-[32px] h-[28px] w-[28px] rounded-[6px] border border-[#d6d6d6] bg-[#f1f1f1]" />
          <span className="ml-[7px] pt-[4px] text-[22px] leading-[28px] text-[#b0b0b0]">C²</span>
        </Field>
      </div>
      <div className="h-[34px] pl-[22px] pt-[7px] text-[22px] leading-[28px] text-[#b3b3b3]">Swap axes</div>
      <div className={GROUP + "ml-[8px] h-[96px] w-[582px] pl-[9px] pt-[13px]"}>
        <div className="flex h-[64px] w-[64px] items-center justify-center border-2 border-[#c8c8c8] bg-gradient-to-b from-[#e2e2e2] to-[#eeeeee]"><SwapIcon /></div>
      </div>
      <div className="h-[20px]" />
      <Histogram />
      <div className="h-[32px] pl-[24px] pt-[5px] text-[22px] leading-[28px] text-[#b3b3b3]">Autoscale</div>
      <div className={GROUP + "ml-[10px] h-[226px] w-[582px] pt-[13px]"}>
        <div className="flex h-[64px] items-center pl-[9px]">
          <div className="flex h-[64px] w-[64px] items-center justify-center border-2 border-[#bcbcbc] bg-gradient-to-b from-[#cfcfcf] to-[#dadada]"><HistGear /></div>
          <div className="ml-[16px] flex h-[64px] w-[64px] items-center justify-center border-2 border-[#c2c2c2] bg-gradient-to-b from-[#e6e6e6] to-[#f0f0f0]"><EqIcon /></div>
          <div className="ml-[142px] flex h-[28px] w-[28px] items-center justify-center rounded-[6px] border border-[#d2d2d2] bg-[#f1f1f1]">
            <svg width="20" height="20" viewBox="0 0 20 20" fill="none" stroke="#a8a8a8" strokeWidth="3.200" strokeLinecap="round" strokeLinejoin="round"><path d="M3 11L8 17L17 3" /></svg>
          </div>
          <span className="ml-[8px] whitespace-nowrap pt-[3px] text-[23.700px] leading-[28px] text-[#b0b0b0]">Show with colormap</span>
        </div>
        {["Quantile bounds", "Difference bound"].map((l, i) => (
          <div key={l} className={"flex h-[42px] items-center " + (i ? "mt-[26px]" : "mt-[24px]")}>
            <div className="w-[190px] text-right text-[22px] leading-[28px] text-[#b0b0b0]">{l}</div>
            <div className="ml-[25px] flex gap-[25px]"><Spin /><Spin /></div>
          </div>
        ))}
      </div>
      <div className="h-[24px]" />
      {["Preprocess", "Spot Data", "Filter", "Scatter and Heatmaps", "n-Dim", "Dimensional Reduction", "Clustering", "Profiling", "Special Functions"].map((t) => (
        <ToolTab key={t} className="h-[66px] pl-[8px]" w={599} knee={519} end={559} drop={40}>{t}</ToolTab>
      ))}
    </div>
  );
}

const NOTES = `**Sample ID: TR3-06**
*********************

:Date: 2024-05-18
:User: Derrick Hasterok`;
const NOTES2 = `
:analytes used: Na23, Mg24, Al27, Si29, P31, Ca43, Ti47, Cr52, Mn55, Fe56, Sr88, Y89, Zr90, Ba137,
La139, Ce140, Pr141, Nd146, Sm147, Eu153, Gd157, Tb159, Dy163, Ho165, Er166, Tm169, Yb172, Lu175,
Hf178, Pb206, Pb208, Th232, U238`;

function CenterPanel() {
  return (
    <div className="flex w-[1357px] shrink-0 flex-col">
      <div className="flex h-[1226px] flex-col items-center pl-px pt-[13px]">
        <Tabs items={[["Single View", 162], ["Multi View", 160], ["Quick View", 160]]} active={2} />
        <div className={GROUP + "-mt-[23px] h-[1171px] w-[1308px] px-[45px] pt-[57px]"}>
          <div className="grid w-[1216px] grid-cols-7">
            {MAPS.map((m, i) => (m ? <MapTile key={m[0]} name={m[0]} spec={m[1]} seed={i + 1} /> : <div key="gap" />))}
          </div>
          <div className="mt-[32px] flex h-[78px] w-[1216px] items-start rounded-[10px] border border-[#d5d5d5] bg-[#dedede] px-[29px] pt-[9px]">
            <ToolButton><SaveIcon /></ToolButton>
            <div className="flex-1" />
            <ActiveSelect className="mr-[28px] mt-[5px] w-[154px]">default</ActiveSelect>
            <ToolButton><ListAdd /></ToolButton>
          </div>
        </div>
      </div>
      <div className="border-t-2 border-[#999] pl-px"><DockTitle h="h-[46px] pt-px" /></div>
      <div className="flex flex-col items-center pl-px pt-[13px]">
        <Tabs items={[["Notes", 104], ["Filters", 112], ["Profiles", 128], ["Plot Info", 136], ["Help", 94]]} active={0} />
        <div className={GROUP + "-mt-[23px] h-[598px] w-[1308px] px-[45px] pt-[57px]"}>
          <div className="flex h-[78px] w-[1216px] items-start gap-[16px] rounded-[10px] border border-[#d5d5d5] bg-[#dedede] px-[29px] pt-[9px]">
            <div className="relative"><ToolButton><span className="font-['Liberation_Serif',serif] text-[42px] leading-[40px] text-[#4d4f52]">H</span></ToolButton><Caret /></div>
            <ToolButton><span className="font-['Liberation_Serif',serif] text-[42px] font-bold leading-[40px] text-[#47494c]">B</span></ToolButton>
            <ToolButton><span className="font-['Liberation_Serif',serif] text-[42px] font-bold italic leading-[40px] text-[#55575a]">I</span></ToolButton>
            <div className="w-[4px]" />
            <ToolButton><ListIcon /></ToolButton>
            <ToolButton><ListIcon numbered /></ToolButton>
            <div className="w-[4px]" />
            <ToolButton><PictureIcon /></ToolButton>
            <div className="relative"><ToolButton><InfoIcon /></ToolButton><Caret /></div>
            <div className="w-[4px]" />
            <ToolButton><PdfIcon /></ToolButton>
          </div>
          <div className="mt-[32px] h-[385px] w-[1216px] border border-t-2 border-[#b9b9b9] border-t-[#8e8e8e] bg-white pl-[9px] pt-[6px]">
            <pre className="m-0 font-['DejaVu_Sans_Mono',monospace] text-[19.940px] leading-[28px] text-black">{NOTES}<span className="inline-block h-[25px] w-[2px] bg-black align-middle" />{"\n" + NOTES2}</pre>
          </div>
        </div>
      </div>
    </div>
  );
}

const ANALYTES = ["Al27", "Ba137", "Ca43", "Ce140", "Cr52", "Dy163", "Er166", "Eu153", "Fe56", "Gd157", "Hf178", "Ho165", "La139", "Lu175", "Mg24", "Mn55", "Na23", "Nd146", "P31", "Pb206", "Pb208", "Pr141", "Si29", "Sm147", "Sr88", "Tb159", "Th232", "Ti47", "Tm169", "U238", "Y89", "Yb172", "Zr90"];

function Disclosure({ open }) {
  return (
    <svg width="18" height="18" viewBox="0 0 18 18" fill="none" stroke="#b9b9b9" strokeWidth="2.800" strokeLinecap="round" strokeLinejoin="round">
      {open === undefined ? null : open ? <path d="M2 6L9 13L16 6" /> : <path d="M7 2L14 9L7 16" />}
    </svg>
  );
}
function Root({ children }) {
  return (
    <div className="flex h-[30px] items-center pl-[13px]">
      <Disclosure open />
      <span className="ml-[20px] text-[22.800px] font-bold">{children}</span>
    </div>
  );
}
function Sample({ children, open }) {
  return (
    <div className="flex h-[30px] items-center pl-[53px]">
      <Disclosure open={open} />
      <span className="ml-[20px] text-[22px]">{children}</span>
    </div>
  );
}

function RightPanel() {
  return (
    <div className="flex flex-1 flex-col border-l-2 border-[#999]">
      <DockTitle h="h-[43px]">Plot and Property Toolbox</DockTitle>
      <div className="mt-[25px] flex h-[56px] items-center">
        <span className="ml-[66px] w-[116px] text-[22px] leading-[28px] text-black">Plot type</span>
        <ActiveSelect className="w-[208px] text-[#222]">analyte map</ActiveSelect>
        <div className="ml-[28px]"><ToolButton><Rocket /></ToolButton></div>
      </div>
      <ToolTab className="ml-[4px] mt-[30px] h-[64px] pl-[8px]" w={481} knee={403} end={442} drop={40}>Plot Selector</ToolTab>
      <div className="ml-[14px] h-[1301px] w-[461px] overflow-hidden border border-t-2 border-[#b5b5b5] border-t-[#8e8e8e] bg-white leading-[30px] text-black">
        <Root>Analyte</Root>
        <Sample open={false}>WOS-02</Sample>
        <Sample open>TR3-06</Sample>
        {ANALYTES.map((a) => (
          <div key={a} className={"flex h-[30px] " + (a === "Mn55" ? "bg-[#dcdcdc]" : "")}>
            <div className={"ml-[121px] flex-1 pl-[10px] text-[22px] " + (a === "Mn55" ? "" : "bg-[#fffec8]")}>{a}</div>
          </div>
        ))}
        <Root>Analyte (normalized)</Root>
        <Sample open={false}>WOS-02</Sample>
        <Sample open={false}>TR3-06</Sample>
        <Root>Ratio</Root>
        <Sample>WOS-02</Sample>
        <Sample>TR3-06</Sample>
        <Root>Ratio (normalized)</Root>
        <Sample>WOS-02</Sample>
      </div>
      <div className="mt-[13px] flex pl-[14px]">
        <div className="relative"><ToolButton className="h-[64px] w-[64px]"><AgIcon /></ToolButton><Caret /></div>
        <div className="ml-[294px]"><ToolButton className="h-[64px] w-[64px]"><Trash /></ToolButton></div>
      </div>
      <div className="flex-1" />
      <ToolTab className="ml-[4px] h-[68px] pl-[8px]" row="h-[47px]" w={481} knee={401} end={442} drop={41} icon={<Palette />}>Styling</ToolTab>
      <ToolTab className="ml-[4px] h-[51px] pl-[3px]" row="h-[47px]" w={481} knee={401} end={442} drop={41} icon={<span className="-mr-[6px]"><CalcIcon s={33} /></span>}>Calculator</ToolTab>
    </div>
  );
}

function Sep() {
  return <div className="ml-[8px] mr-[10px] h-[62px] w-0 border-l-2 border-dotted border-[#7a7a7a]" />;
}
function Tool({ children }) {
  return <div className="flex w-[76px] justify-center pt-[2px]">{children}</div>;
}

export default function App() {
  return (
    <div className="h-[2334px] w-[2674px] overflow-hidden bg-white pl-[112px] pt-[76px] font-['Inter',sans-serif]">
      <div className="flex h-[2110px] w-[2450px] flex-col overflow-hidden rounded-[22px] bg-[#ebebeb] shadow-[0_0_0_1px_rgba(0,0,0,0.25),0_36px_90px_rgba(0,0,0,0.5)]">
        <div className="flex h-[57px] shrink-0 items-center border-b-2 border-[#d8d8d8] bg-[#f2f2f2]">
          <div className="flex w-[300px] gap-[16px] pl-[16px]">
            <div className="h-[24px] w-[24px] rounded-full border border-[#d85a50] bg-[#ed6a5e]" />
            <div className="h-[24px] w-[24px] rounded-full border border-[#dba63c] bg-[#f4bf4f]" />
            <div className="h-[24px] w-[24px] rounded-full border border-[#52ad45] bg-[#61c554]" />
          </div>
          <div className="flex-1 pb-px text-center text-[26.200px] font-bold leading-[30px] text-[#4a4a4a]">LaME: Laser Map Explorer</div>
          <div className="w-[300px]" />
        </div>
        <div className="flex h-[71px] shrink-0 items-center border-b-[3px] border-[#adadad] bg-gradient-to-b from-[#ebebeb] to-[#c9c9c9]">
          <div className="ml-[14px] mr-[2px] flex flex-col gap-[8px]">
            {[0, 1, 2, 3].map((i) => <div key={i} className="h-[4px] w-[4px] rounded-full bg-[#a5a5a5]" />)}
          </div>
          <Tool><NewDoc /></Tool><Tool><Folder /></Tool><Tool><Atom /></Tool><Tool><Chef /></Tool><Tool><Tree /></Tool>
          <Sep />
          <Tool><PolygonIcon /></Tool><Tool><Funnel /></Tool><Tool><Capsule /></Tool><Tool><Mask /></Tool><Tool><HeatDiag /></Tool>
          <Sep />
          <Tool><Grid9 /></Tool><Tool><HistIcon /></Tool><Tool><ScatterIcon /></Tool><Tool><TernIcon /></Tool><Tool><PlotIcon /></Tool><Tool><Bubbles /></Tool>
          <Sep />
          <Tool><ProfileIcon /></Tool><Tool><CalcIcon /></Tool>
          <Sep />
          <Tool><Nuke /></Tool>
        </div>
        <div className="flex h-[1928px] shrink-0">
          <LeftPanel />
          <CenterPanel />
          <RightPanel />
        </div>
        <div className="flex-1 border-t-2 border-[#7d7d7d] bg-gradient-to-b from-[#ebebeb] to-[#b2b2b2]" />
      </div>
    </div>
  );
}
